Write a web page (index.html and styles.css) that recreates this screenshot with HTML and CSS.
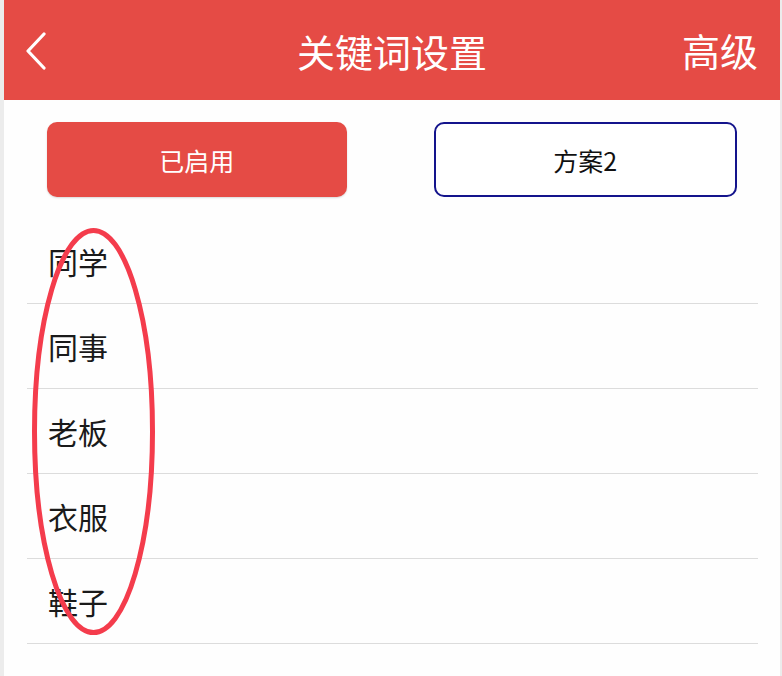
FILE: index.html
```html
<!DOCTYPE html>
<html lang="zh-CN">
<head>
<meta charset="utf-8">
<title>关键词设置</title>
<link rel="stylesheet" href="styles.css">
</head>
<body>
<div class="screen">
  <div class="page">
    <header class="topbar">
      <span class="back">
        <svg width="22" height="38" viewBox="0 0 22 38"><polyline points="19,2 3,19 19,36" fill="none" stroke="#fff" stroke-width="3.2" stroke-linecap="round" stroke-linejoin="round"/></svg>
      </span>
      <h1 class="title">关键词设置</h1>
      <span class="action">高级</span>
    </header>
    <div class="tabs">
      <div class="btn btn-on">已启用</div>
      <div class="btn btn-plan">方案2</div>
    </div>
    <ul class="list">
      <li class="row">同学</li>
      <li class="row">同事</li>
      <li class="row">老板</li>
      <li class="row">衣服</li>
      <li class="row">鞋子</li>
    </ul>
  </div>
  <svg class="mark" width="782" height="676" viewBox="0 0 782 676"><ellipse cx="93.5" cy="431.5" rx="59" ry="201" fill="none" stroke="#f43c4c" stroke-width="5"/></svg>
</div>
</body>
</html>
```
FILE: styles.css
```css
html, body {
  margin: 0;
  padding: 0;
  background: #ececec;
}
body {
  font-family: "Noto Sans CJK SC", "Noto Sans", sans-serif;
}
.screen {
  position: relative;
  width: 782px;
  height: 676px;
  overflow: hidden;
  background: #ececec;
}
.page {
  margin: 0 2px 0 4px;
  height: 676px;
  background: #fefefe;
}
.topbar {
  height: 100px;
  background: #e54b45;
  display: flex;
  align-items: center;
  justify-content: space-between;
  padding: 0 22px 0 21px;
  box-sizing: border-box;
  position: relative;
}
.back {
  display: flex;
  width: 22px;
  height: 38px;
  margin-top: 2px;
}
.title {
  position: absolute;
  left: 0;
  right: 0;
  top: 0;
  bottom: 0;
  margin: 0;
  display: flex;
  align-items: center;
  justify-content: center;
  font-size: 38px;
  font-weight: 400;
  color: #fff;
  pointer-events: none;
}
.action {
  font-size: 38px;
  color: #fff;
  line-height: 1;
  position: relative;
}
.tabs {
  display: flex;
  gap: 87px;
  padding: 22px 43px 0 43px;
  height: 75px;
}
.btn {
  flex: 1;
  display: flex;
  align-items: center;
  justify-content: center;
  border-radius: 10px;
  font-size: 25px;
  box-sizing: border-box;
}
.btn-on {
  background: #e54b45;
  color: #fff;
  box-shadow: 0 1px 2px rgba(0,0,0,0.15);
}
.btn-plan {
  background: #fff;
  border: 2px solid #14148c;
  color: #111;
}
.list {
  list-style: none;
  margin: 22px 22px 0 23px;
  padding: 0;
}
.row {
  border-bottom: 1px solid #dcdcdc;
  display: flex;
  align-items: center;
  padding: 0 0 0 21px;
  box-sizing: content-box;
  height: 84px;
  font-size: 30px;
  color: #1a1a1a;
}
.mark {
  position: absolute;
  left: 0;
  top: 0;
  pointer-events: none;
}
```
